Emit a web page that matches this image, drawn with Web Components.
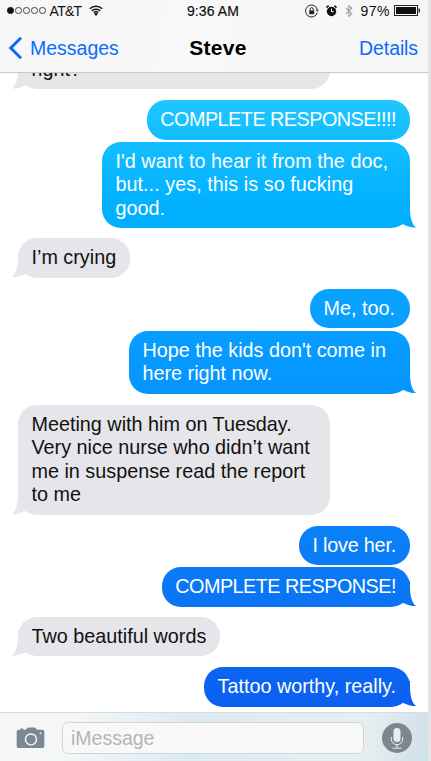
<!DOCTYPE html>
<html><head><meta charset="utf-8"><style>
html,body{margin:0;padding:0;height:100%;background:#fff}
body{font-family:"Liberation Sans",Arial,sans-serif;overflow:hidden}
</style></head><body>
<template id="t-screen"><style>
:host{display:flex;flex-direction:column;width:428px;height:761px;background:#fff;border-right:3px solid #e4e4e6;box-sizing:content-box;overflow:hidden}
.thread{flex:1 1 0;min-height:0;overflow:hidden;display:flex;flex-direction:column;justify-content:flex-end;padding-bottom:5.500px;box-sizing:border-box}
</style><slot name="top"></slot><div class="thread"><slot></slot></div><slot name="bottom"></slot></template>

<template id="t-top"><style>
:host{display:block;height:73px;flex:none;box-sizing:border-box;border-bottom:1px solid #c9c9cd;background:linear-gradient(100deg,#f5f6f6,#f8f8f8 45%,#f6f6f6)}
.status{height:21px;display:flex;align-items:center;padding:0 8px 0 7px;font-size:14px;color:#111}
.l,.r{display:flex;align-items:center;flex:1}
.r{justify-content:flex-end}
.dots{display:flex;gap:1.400px;margin-right:4px}
.dots i{width:4.600px;height:4.600px;border:.8px solid #444;border-radius:50%;box-sizing:content-box}
.dots i:first-child{background:#111;border-color:#111}
.time{letter-spacing:.1px;-webkit-text-stroke:.2px #111;margin-left:-1px}
.nav{height:44px;margin-top:5px;display:grid;grid-template-columns:1fr auto 1fr;align-items:center;padding:0 10px 0 8px;font-size:19.5px;color:#0c6bff}
.back{display:flex;align-items:center;gap:7px}
.title{color:#000;font-weight:700;font-size:21px;letter-spacing:.3px;padding-left:10px}
.det{text-align:right;letter-spacing:-.1px}
svg{display:block}
</style>
<div class="status"><div class="l"><span class="dots"><i></i><i></i><i></i><i></i><i></i></span><span style="letter-spacing:-.7px">AT&amp;T</span>
<svg width="14" height="11" viewBox="0 0 18 14" style="margin-left:8px"><path d="M1 4.800A11.500 11.500 0 0 1 17 4.800M3.600 7.500A7.800 7.800 0 0 1 14.400 7.500M6.200 9.900A4.200 4.200 0 0 1 11.800 9.900" fill="none" stroke="#111" stroke-width="2"/><path d="M9 14L6.600 11.500A3 3 0 0 1 11.400 11.500Z" fill="#111"/></svg></div>
<span class="time">9:36 AM</span>
<div class="r">
<svg width="14" height="14" viewBox="0 0 14 14" style="margin-right:7px"><path d="M12.300 8.700A6 6 0 1 1 12.200 5" fill="none" stroke="#222" stroke-width="1"/><path d="M10.600 5.600h3.200l-1.600 2.100z" fill="#222"/><rect x="4.200" y="6.400" width="5" height="3.800" fill="#222"/><path d="M5.200 6.400V5.100a1.500 1.500 0 0 1 3 0v1.300" fill="none" stroke="#222"/></svg>
<svg width="11" height="12" viewBox="0 0 11 12" style="margin-right:8px"><circle cx="5.500" cy="6.500" r="4.700" fill="#111"/><path d="M5.500 3.500v3.200h2.200" fill="none" stroke="#fff" stroke-width="1"/><path d="M.5 2.600L2.600.6M10.500 2.600L8.400.6" stroke="#111" stroke-width="1.500"/></svg>
<svg width="8" height="14" viewBox="0 0 9 14" style="margin-right:7px"><path d="M1 3.800L7.600 10 4.400 13V1L7.600 4 1 10.200" fill="none" stroke="#9a9a9a" stroke-width="1.200"/></svg>
<span style="letter-spacing:.5px">97%</span>
<svg width="26" height="11" viewBox="0 0 26 11" style="margin-left:4px"><rect x=".5" y=".5" width="23" height="10" fill="none" stroke="#222"/><rect x="2" y="2" width="20" height="7" fill="#111"/><rect x="24.500" y="3.500" width="1.500" height="4" fill="#333"/></svg>
</div></div>
<div class="nav"><div class="back"><svg width="15" height="24" viewBox="0 0 15 24"><path d="M13 1.800L2.800 12 13 22.200" fill="none" stroke="#0c6bff" stroke-width="3"/></svg><span>Messages</span></div><div class="title">Steve</div><div class="det">Details</div></div></template>

<template id="t-msg"><style>
:host{display:flex;flex:none;font-size:19.8px;line-height:23.5px;margin-top:var(--gap,3px)}
:host([from=me]){justify-content:flex-end;padding-right:18px}
:host([from=them]){justify-content:flex-start;padding-left:18px}
.b{position:relative;box-sizing:border-box;padding:8px var(--pr,14px) 8px 13.5px;border-radius:19px;width:var(--w,auto);letter-spacing:var(--ls,0)}
.me-bg{background:linear-gradient(180deg,#1fc6ff 100px,#00b0ff 210px,#09a0ff 310px,#0496ff 385px,#0a7ff7 545px,#0b60f0 700px) fixed}
:host([from=me]) .b{color:#fff}
:host([from=them]) .b{background:#e5e5ea;color:#111}
.t{position:absolute;bottom:0;width:20px;height:26px;display:none}
:host([tail]) .t{display:block}
:host([from=me]) .t{right:-6px;clip-path:path("M0 0H14V6C14 14 15.500 22 20 25.600C16.500 25.800 11 24.500 7.500 22.500L0 20Z")}
:host([from=them]) .t{left:-6px;background:#e5e5ea;clip-path:path("M20 0H6V6C6 14 4.500 22 0 25.600C3.500 25.800 9 24.500 12.500 22.500L20 20Z")}
</style><div class="b" part="b"><slot></slot><span class="t"></span></div></template>

<template id="t-input"><style>
:host{display:flex;flex:none;height:49px;align-items:center;box-sizing:border-box;border-top:1px solid #d8dadc;background:linear-gradient(100deg,#f6f6f6 0%,#f3f6f7 18%,#dceaf3 45%,#e2edf3 65%,#e6eef0 85%,#cfe0e8 100%);padding:1px 16px 0 16px}
.cam{margin-right:17px;flex:none}
.field{flex:1;height:32px;box-sizing:border-box;border:1px solid #d3d5d7;border-radius:6px;background:#f8f8f8;font-size:19.5px;color:#b4b4b8;padding:0 8px;line-height:31px}
.mic{flex:none;margin-left:18px}
</style>
<svg class="cam" width="29" height="21" viewBox="0 0 29 22"><path fill-rule="evenodd" fill="#7b8793" d="M2 3h2V1.600h3V3h2.500L12 .4h7L21.500 3H27a2 2 0 0 1 2 2v15a2 2 0 0 1-2 2H2a2 2 0 0 1-2-2V5a2 2 0 0 1 2-2ZM15 6.500a6.500 6.500 0 1 0 .01 0ZM15 8a5 5 0 1 1-.01 0Z"/><circle cx="25" cy="6.500" r="1" fill="#e8edf0"/></svg>
<div class="field">iMessage</div>
<svg class="mic" width="30" height="30" viewBox="0 0 30 30"><circle cx="15" cy="15" r="15" fill="#7d8690"/><rect x="11.500" y="5" width="7" height="14" rx="3.500" fill="#e9edf0"/><path d="M9.300 14v2a5.700 5.700 0 0 0 11.400 0v-2M15 21.700V25M10.500 25.200h9" fill="none" stroke="#e9edf0" stroke-width="1"/></svg></template>

<script>
function def(name,id,init){customElements.define(name,class extends HTMLElement{constructor(){super();this.attachShadow({mode:'open'}).appendChild(document.getElementById(id).content.cloneNode(true));}
connectedCallback(){if(init)init(this);}});}
def('sms-screen','t-screen');def('sms-top','t-top');
def('sms-msg','t-msg',function(el){if(el.getAttribute('from')==='me'){el.shadowRoot.querySelector('.b').classList.add('me-bg');el.shadowRoot.querySelector('.t').classList.add('me-bg');}});
def('sms-input','t-input');
</script>
<sms-screen>
<sms-top slot="top"></sms-top>
<sms-msg from="them" tail style="--w:312px">right?</sms-msg>
<sms-msg from="me" style="--gap:11px;--ls:-.5px">COMPLETE RESPONSE!!!!</sms-msg>
<sms-msg from="me" tail style="--gap:2px;--pr:22px;--ls:.05px">I'd want to hear it from the doc,<br>but... yes, this is so fucking<br>good.</sms-msg>
<sms-msg from="them" tail style="--gap:10px">I’m crying</sms-msg>
<sms-msg from="me" style="--gap:11px;--pr:15px">Me, too.</sms-msg>
<sms-msg from="me" tail style="--gap:2.500px;--pr:24px">Hope the kids don't come in<br>here right now.</sms-msg>
<sms-msg from="them" tail style="--gap:11px;--pr:20px">Meeting with him on Tuesday.<br>Very nice nurse who didn’t want<br>me in suspense read the report<br>to me</sms-msg>
<sms-msg from="me" style="--gap:11px;--ls:-.2px">I love her.</sms-msg>
<sms-msg from="me" tail style="--gap:2px;--ls:-.5px">COMPLETE RESPONSE!</sms-msg>
<sms-msg from="them" tail style="--gap:10px">Two beautiful words</sms-msg>
<sms-msg from="me" tail style="--gap:11px">Tattoo worthy, really.</sms-msg>
<sms-input slot="bottom"></sms-input>
</sms-screen>
</body></html>
